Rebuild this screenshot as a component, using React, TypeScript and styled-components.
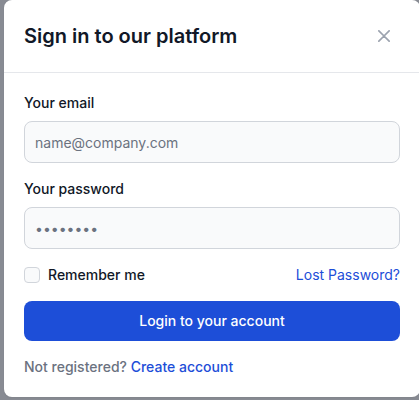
import React from "react";
import styled, { createGlobalStyle } from "styled-components";

const Global = createGlobalStyle`
  html, body {
    margin: 0;
    padding: 0;
    overflow: hidden;
    background: #888b93;
    font-family: Inter, "Noto Sans", "Liberation Sans", sans-serif;
  }
  * { box-sizing: border-box; }
`;

const Page = styled.div`
  width: 419px;
  height: 400px;
  padding-left: 4px;
`;

const Modal = styled.div`
  width: 416px;
  background: #ffffff;
  border-radius: 8px;
  box-shadow: 0 1px 2px rgba(0, 0, 0, 0.05);
`;

const Header = styled.div`
  display: flex;
  align-items: center;
  justify-content: space-between;
  padding: 20px;
  border-bottom: 1px solid #e5e7eb;
`;

const Title = styled.h3`
  margin: 0;
  font-size: 20px;
  line-height: 28px;
  font-weight: 600;
  color: #111827;
`;

const CloseButton = styled.button`
  width: 32px;
  height: 32px;
  display: inline-flex;
  align-items: center;
  justify-content: center;
  border: none;
  background: transparent;
  border-radius: 8px;
  color: #9ca3af;
  padding: 0;
  cursor: pointer;
`;

const Body = styled.form`
  padding: 20px;
  display: flex;
  flex-direction: column;
  gap: 16px;
`;

const Field = styled.div`
  display: flex;
  flex-direction: column;
`;

const Label = styled.label`
  display: block;
  margin-bottom: 8px;
  font-size: 14px;
  line-height: 20px;
  font-weight: 500;
  color: #111827;
`;

const Input = styled.input`
  width: 100%;
  height: 42px;
  padding: 10px;
  font-family: inherit;
  font-size: 14px;
  line-height: 20px;
  color: #111827;
  background: #f9fafb;
  border: 1px solid #d1d5db;
  border-radius: 8px;
  outline: none;
  &::placeholder {
    color: #6b7280;
    opacity: 1;
  }
`;

const Row = styled.div`
  display: flex;
  align-items: center;
  justify-content: space-between;
  height: 20px;
`;

const CheckWrap = styled.label`
  display: flex;
  align-items: center;
  gap: 8px;
  font-size: 14px;
  line-height: 20px;
  font-weight: 500;
  color: #111827;
`;

const Checkbox = styled.input`
  appearance: none;
  -webkit-appearance: none;
  margin: 0;
  width: 16px;
  height: 16px;
  border: 1px solid #d1d5db;
  border-radius: 4px;
  background: #f9fafb;
`;

const Link = styled.a`
  font-size: 14px;
  line-height: 20px;
  font-weight: ${(p: { $weight?: number }) => p.$weight ?? 400};
  color: #1d4ed8;
  text-decoration: none;
`;

const Submit = styled.button`
  width: 100%;
  height: 40px;
  border: none;
  border-radius: 8px;
  background: #1d4ed8;
  color: #ffffff;
  font-family: inherit;
  font-size: 14px;
  line-height: 20px;
  font-weight: 500;
  cursor: pointer;
`;

const Footer = styled.div`
  font-size: 14px;
  line-height: 20px;
  font-weight: 500;
  color: #6b7280;
`;

export default function App() {
  return (
    <>
      <Global />
      <Page>
        <Modal>
          <Header>
            <Title>Sign in to our platform</Title>
            <CloseButton type="button" aria-label="Close modal">
              <svg width="12" height="12" viewBox="0 0 14 14" fill="none">
                <path
                  d="m1 1 6 6m0 0 6 6M7 7l6-6M7 7l-6 6"
                  stroke="currentColor"
                  strokeWidth="2"
                  strokeLinecap="round"
                  strokeLinejoin="round"
                />
              </svg>
            </CloseButton>
          </Header>
          <Body onSubmit={(e) => e.preventDefault()}>
            <Field>
              <Label htmlFor="email">Your email</Label>
              <Input id="email" type="email" placeholder="name@company.com" />
            </Field>
            <Field>
              <Label htmlFor="password">Your password</Label>
              <Input id="password" type="password" placeholder="••••••••" />
            </Field>
            <Row>
              <CheckWrap>
                <Checkbox type="checkbox" />
                Remember me
              </CheckWrap>
              <Link href="#">Lost Password?</Link>
            </Row>
            <Submit type="submit">Login to your account</Submit>
            <Footer>
              Not registered? <Link href="#" $weight={500}>Create account</Link>
            </Footer>
          </Body>
        </Modal>
      </Page>
    </>
  );
}
